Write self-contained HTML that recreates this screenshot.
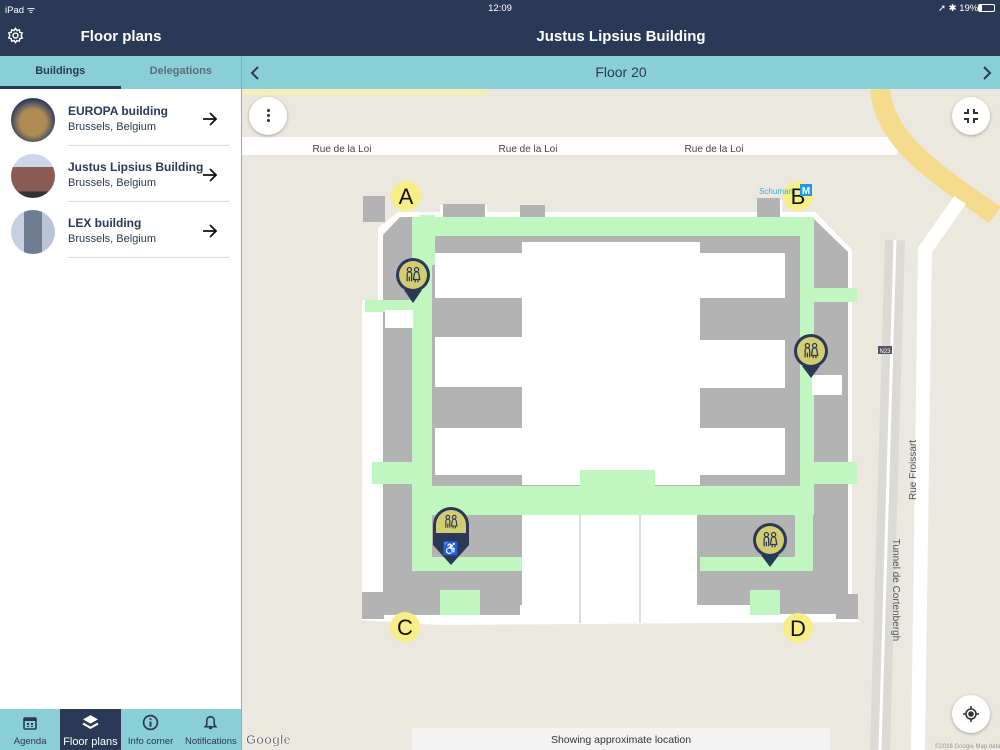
<!DOCTYPE html>
<html><head><meta charset="utf-8"><style>
*{margin:0;padding:0;box-sizing:border-box}
body{width:1000px;height:750px;overflow:hidden;font-family:"Liberation Sans",sans-serif;background:#ebe8df;position:relative}
.abs{position:absolute}
#hdr{left:0;top:0;width:1000px;height:56px;background:#2a3a56;color:#fff}
#side{left:0;top:56px;width:242px;height:694px;background:#fff;border-right:1px solid #9aa}
.tabs{height:33px;background:#8acfd6;display:flex;font-size:11px;font-weight:bold}
.tabs div{flex:1;text-align:center;line-height:31px;color:#5c6b7a}
.tabs div.on{color:#2a3a56;border-bottom:3px solid #2a3a56}
.row{position:absolute;left:0;width:241px;height:56px}
.av{position:absolute;left:11px;top:8px;width:44px;height:44px;border-radius:50%}
.nm{position:absolute;left:68px;top:14px;font-size:12px;font-weight:bold;color:#2a3a56}
.ct{position:absolute;left:68px;top:31px;font-size:11px;color:#2a3a56}
.ar{position:absolute;left:202px;top:21px}
.sep{position:absolute;left:68px;right:12px;bottom:0;height:1px;background:#ddd}
#bt{left:0;top:709px;width:241px;height:41px;background:#8acfd6;display:flex}
#bt div{flex:1;text-align:center;font-size:9.5px;color:#2a3a56;padding-top:27px;position:relative}
#bt div.on{background:#2a3a56;color:#fff;font-size:11px}
#fl{left:242px;top:56px;width:758px;height:33px;background:#8acfd6;color:#2a3a56;font-size:14px;text-align:center;line-height:33px}
.btn{position:absolute;width:38px;height:38px;border-radius:50%;background:#fff;box-shadow:0 1px 3px rgba(0,0,0,.3)}
</style></head><body>
<svg width="0" height="0" style="position:absolute"><defs>
<symbol id="wc" viewBox="0 0 20 20"><g fill="none" stroke="#2a3a56" stroke-width="1.4"><circle cx="6" cy="4" r="2.3"/><circle cx="14" cy="4" r="2.3"/><path d="M3.5 17V9a2.5 2.5 0 0 1 5 0v8M6 12v5M11.5 9a2.5 2.5 0 0 1 5 0l1 6h-7z M12.5 15v3M15.5 15v3"/></g></symbol>
<symbol id="arr" viewBox="0 0 16 16"><path d="M1 8h13M8 2l6 6-6 6" fill="none" stroke="#111" stroke-width="1.8"/></symbol>
</defs></svg>
<div id="hdr" class="abs">
<div class="abs" style="left:5px;top:3px;font-size:9.5px">iPad ᯤ</div>
<div class="abs" style="left:0;width:1000px;top:3px;font-size:9.5px;text-align:center">12:09</div>
<div class="abs" style="left:938px;top:3px;font-size:9.5px">➚ ✱ 19%</div>
<div class="abs" style="left:978px;top:4px;width:17px;height:8px;border:1px solid #fff;border-radius:2px"><div style="width:3px;height:6px;background:#fff"></div></div>
<svg class="abs" style="left:7px;top:27px" width="17" height="17" viewBox="0 0 24 24" fill="none" stroke="#fff" stroke-width="2"><circle cx="12" cy="12" r="3.5"/><path d="M12 2l2 3 3.5-1 .5 3.5 3.5 1-1.5 3.5 1.5 3.5-3.5 1-.5 3.5-3.5-1-2 3-2-3-3.5 1-.5-3.5-3.5-1L4 12 2.5 8.5l3.5-1L6.5 4 10 5z"/></svg>
<div class="abs" style="left:0;width:242px;top:28px;font-size:15px;text-align:center;font-weight:bold">Floor plans</div>
<div class="abs" style="left:242px;width:758px;top:28px;font-size:15px;text-align:center;font-weight:bold">Justus Lipsius Building</div>
</div>
<div id="side" class="abs">
<div class="tabs"><div class="on">Buildings</div><div>Delegations</div></div>
<div class="row" style="top:34px"><div class="av" style="background:radial-gradient(circle at 50% 55%,#b08a55 0 40%,#2c3e60 70%)"></div><div class="nm">EUROPA building</div><div class="ct">Brussels, Belgium</div><svg class="ar" width="16" height="16"><use href="#arr"/></svg><div class="sep"></div></div>
<div class="row" style="top:90px"><div class="av" style="background:linear-gradient(180deg,#cdd6e6 0 30%,#8a5a55 30% 85%,#333 85%)"></div><div class="nm">Justus Lipsius Building</div><div class="ct">Brussels, Belgium</div><svg class="ar" width="16" height="16"><use href="#arr"/></svg><div class="sep"></div></div>
<div class="row" style="top:146px"><div class="av" style="background:linear-gradient(90deg,#c5cfe0 0 30%,#6f7d90 30% 70%,#b9c4d6 70%)"></div><div class="nm">LEX building</div><div class="ct">Brussels, Belgium</div><svg class="ar" width="16" height="16"><use href="#arr"/></svg><div class="sep"></div></div>
</div>
<div id="bt" class="abs">
<div>Agenda<svg class="abs" style="left:22px;top:6px" width="16" height="16" viewBox="0 0 16 16"><rect x="2" y="3" width="12" height="11" rx="1" fill="none" stroke="#2a3a56" stroke-width="1.6"/><rect x="2" y="3" width="12" height="3" fill="#2a3a56"/><path d="M5 8h2v2H5zM9 8h2v2H9zM5 11h2v1H5zM9 11h2v1H9z" fill="#2a3a56"/></svg></div>
<div class="on">Floor plans<svg class="abs" style="left:22px;top:5px" width="17" height="17" viewBox="0 0 16 16"><path d="M8 1l7 4-7 4-7-4z" fill="#fff"/><path d="M1 9l7 4 7-4" fill="none" stroke="#fff" stroke-width="2"/></svg></div>
<div>Info corner<svg class="abs" style="left:21px;top:5px" width="17" height="17" viewBox="0 0 16 16"><circle cx="8" cy="8" r="6.5" fill="none" stroke="#2a3a56" stroke-width="1.6"/><path d="M8 7v5M8 4v1.5" stroke="#2a3a56" stroke-width="1.8"/></svg></div>
<div>Notifications<svg class="abs" style="left:21px;top:5px" width="17" height="17" viewBox="0 0 16 16"><path d="M3 12h10l-1.5-2V6a3.5 3.5 0 0 0-7 0v4z M6.5 13.5h3" fill="none" stroke="#2a3a56" stroke-width="1.5"/></svg></div>
</div>
<div id="fl" class="abs">Floor 20<svg class="abs" style="left:8px;top:10px" width="10" height="14" viewBox="0 0 10 14"><path d="M8 1L2 7l6 6" fill="none" stroke="#2a3a56" stroke-width="2"/></svg><svg class="abs" style="right:8px;top:10px" width="10" height="14" viewBox="0 0 10 14"><path d="M2 1l6 6-6 6" fill="none" stroke="#2a3a56" stroke-width="2"/></svg></div>

<svg class="abs" style="left:242px;top:89px" width="758" height="661" viewBox="242 89 758 661">
<rect x="242" y="89" width="758" height="661" fill="#ebe8df"/>
<rect x="242" y="89" width="245" height="6" fill="#f8eeb8"/>
<rect x="242" y="137" width="655" height="18" fill="#fff"/>
<path d="M880 89 C885 140 930 170 995 215" stroke="#f5dc8c" stroke-width="20" fill="none"/>
<path d="M895 240 L880 750" stroke="#dcdad4" stroke-width="20" fill="none"/>
<path d="M895 240 L880 750" stroke="#fff" stroke-width="3" fill="none"/>
<path d="M960 200 L925 250 L918 750" stroke="#fff" stroke-width="14" fill="none"/>
<text x="342" y="152" font-size="10" fill="#444" text-anchor="middle">Rue de la Loi</text>
<text x="528" y="152" font-size="10" fill="#444" text-anchor="middle">Rue de la Loi</text>
<text x="714" y="152" font-size="10" fill="#444" text-anchor="middle">Rue de la Loi</text>
<text x="916" y="470" font-size="10" fill="#555" transform="rotate(-90 916 470)" text-anchor="middle">Rue Froissart</text>
<text x="893" y="590" font-size="10" fill="#555" transform="rotate(90 893 590)" text-anchor="middle">Tunnel de Cortenbergh</text>
<rect x="878" y="346" width="14" height="8" fill="#556" /><text x="885" y="353" font-size="6" fill="#fff" text-anchor="middle">N23</text>
<polygon points="378,228 398,212 440,212 440,205 487,205 487,212 762,212 762,198 782,198 782,212 815,212 852,250 852,612 860,622 440,625 362,620 362,300 378,300" fill="#fff"/>
<polygon points="383,235 400,217 520,217 520,205 545,205 545,217 812,217 848,252 848,614 780,614 780,605 520,605 520,615 383,615" fill="#b3b3b3"/>
<rect x="363" y="196" width="22" height="26" fill="#b3b3b3"/><rect x="757" y="198" width="23" height="22" fill="#b3b3b3"/>
<rect x="443" y="204" width="42" height="16" fill="#b3b3b3"/>
<rect x="362" y="592" width="22" height="27" fill="#b3b3b3"/><rect x="836" y="594" width="22" height="25" fill="#b3b3b3"/>
<rect x="412" y="217" width="402" height="298" fill="#c0f7c0"/>
<rect x="432" y="236" width="368" height="250" fill="#b3b3b3"/>
<rect x="522" y="242" width="178" height="243" fill="#fff"/>
<g fill="#fff"><rect x="435" y="253" width="87" height="45"/><rect x="435" y="337" width="87" height="50"/><rect x="435" y="428" width="87" height="47"/>
<rect x="700" y="253" width="85" height="45"/><rect x="700" y="340" width="85" height="48"/><rect x="700" y="428" width="85" height="47"/></g>
<rect x="580" y="470" width="75" height="30" fill="#c0f7c0"/>
<rect x="412" y="515" width="20" height="52" fill="#c0f7c0"/><rect x="412" y="557" width="110" height="14" fill="#c0f7c0"/>
<rect x="795" y="515" width="18" height="52" fill="#c0f7c0"/><rect x="700" y="557" width="113" height="14" fill="#c0f7c0"/>
<rect x="522" y="515" width="175" height="108" fill="#fff"/>
<path d="M580 515v108M640 515v108" stroke="#bbb"/>
<rect x="440" y="590" width="40" height="25" fill="#c0f7c0"/><rect x="750" y="590" width="30" height="25" fill="#c0f7c0"/>
<rect x="420" y="215" width="15" height="50" fill="#c0f7c0"/>
<rect x="365" y="300" width="50" height="12" fill="#c0f7c0"/><rect x="372" y="462" width="42" height="22" fill="#c0f7c0"/>
<rect x="812" y="288" width="45" height="14" fill="#c0f7c0"/><rect x="812" y="462" width="45" height="22" fill="#c0f7c0"/>
<rect x="385" y="310" width="28" height="18" fill="#fff"/><rect x="812" y="375" width="30" height="20" fill="#fff"/>
<g font-size="22" text-anchor="middle" fill="#111">
<circle cx="406" cy="196" r="15" fill="#f7ee86"/><text x="406" y="204">A</text>
<circle cx="798" cy="196" r="15" fill="#f7ee86"/><text x="798" y="204">B</text>
<circle cx="405" cy="627" r="15" fill="#f7ee86"/><text x="405" y="635">C</text>
<circle cx="798" cy="628" r="15" fill="#f7ee86"/><text x="798" y="636">D</text></g>
<text x="776" y="194" font-size="8" fill="#3ba8dc" text-anchor="middle">Schuman</text>
<rect x="800" y="184" width="12" height="12" fill="#1a9bea"/><text x="806" y="194" font-size="10" fill="#fff" text-anchor="middle" font-weight="bold">M</text>
<g>
<path d="M404 290 L413 303 L422 290Z" fill="#2a3a56"/><circle cx="413" cy="275" r="17" fill="#2a3a56"/><circle cx="413" cy="275" r="14" fill="#d2cc73"/><use href="#wc" x="404" y="266" width="18" height="18"/>
<path d="M802 366 L811 378 L820 366Z" fill="#2a3a56"/><circle cx="811" cy="351" r="17" fill="#2a3a56"/><circle cx="811" cy="351" r="14" fill="#d2cc73"/><use href="#wc" x="802" y="342" width="18" height="18"/>
<path d="M761 555 L770 567 L779 555Z" fill="#2a3a56"/><circle cx="770" cy="540" r="17" fill="#2a3a56"/><circle cx="770" cy="540" r="14" fill="#d2cc73"/><use href="#wc" x="761" y="531" width="18" height="18"/>
<path d="M433 525 a18 18 0 0 1 36 0 v20 l-9 10 l-9 10 l-9 -10 l-9 -10z" fill="#2a3a56"/><path d="M436 525 a15 15 0 0 1 30 0 v8 h-30z" fill="#d2cc73"/><use href="#wc" x="443" y="514" width="16" height="16"/><text x="451" y="553" font-size="13" text-anchor="middle" fill="#d2cc73">♿</text>
</g>
<text x="246" y="744" font-size="13" font-weight="bold" fill="#666" stroke="#fff" stroke-width=".6">Google</text>
<rect x="412" y="728" width="418" height="22" fill="#f3f3f3"/>
<text x="621" y="743" font-size="10.5" fill="#333" text-anchor="middle">Showing approximate location</text>
<text x="935" y="748" font-size="6" fill="#999">©2018 Google Map data ©2018 Google</text>
</svg>
<div class="btn" style="left:249px;top:97px"><div class="abs" style="left:18px;top:12px;width:3px;height:3px;border-radius:50%;background:#333;box-shadow:0 5px #333,0 10px #333"></div></div>
<div class="btn" style="left:952px;top:97px"><svg class="abs" style="left:10px;top:10px" width="18" height="18" viewBox="0 0 18 18" fill="none" stroke="#333" stroke-width="2"><path d="M2 6h4V2M16 6h-4V2M2 12h4v4M16 12h-4v4"/></svg></div>
<div class="btn" style="left:952px;top:695px"><svg class="abs" style="left:10px;top:10px" width="18" height="18" viewBox="0 0 18 18" fill="none" stroke="#333" stroke-width="1.6"><circle cx="9" cy="9" r="5"/><circle cx="9" cy="9" r="2" fill="#333"/><path d="M9 1v3M9 14v3M1 9h3M14 9h3"/></svg></div>
</body></html>
